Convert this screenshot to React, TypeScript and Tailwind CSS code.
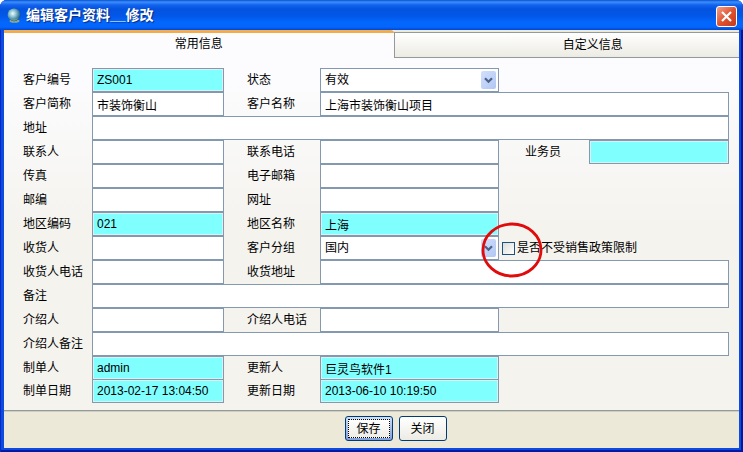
import type { ReactNode } from 'react';

const inputBase =
  'block h-6 w-full min-w-0 rounded-none border border-[#8499af] px-1 text-[12px] leading-4 text-black outline-none';

type FieldProps = {
  id: string;
  label: string;
  value?: string;
  readOnly?: boolean;
  labelClass?: string;
  span?: string;
};

function Label({ id, className = '', children }: { id: string; className?: string; children: ReactNode }) {
  return (
    <label htmlFor={id} className={`whitespace-nowrap leading-4 ${className}`}>
      {children}
    </label>
  );
}

function Field({ id, label, value = '', readOnly = false, labelClass = '', span = '' }: FieldProps) {
  return (
    <>
      <Label id={id} className={labelClass}>
        {label}
      </Label>
      <div className={span}>
        <input
          id={id}
          type="text"
          defaultValue={value}
          readOnly={readOnly}
          className={`${inputBase} ${readOnly ? 'bg-[#80ffff] shadow-[inset_0_0_0_1px_#d8f2f2]' : 'bg-white'}`}
        />
      </div>
    </>
  );
}

function SelectField({ id, label, value }: { id: string; label: string; value: string }) {
  return (
    <>
      <Label id={id} className="pl-[23px]">
        {label}
      </Label>
      <div className="relative">
        <select id={id} defaultValue={value} className={`${inputBase} appearance-none bg-white`}>
          <option>{value}</option>
        </select>
        <span className="pointer-events-none absolute top-[3px] right-[3px] flex h-[18px] w-[15px] items-center justify-center rounded-[2px] bg-linear-to-br from-[#d3e0fd] to-[#b0c6f4]">
          <svg width="9" height="7" viewBox="0 0 9 7" fill="none" aria-hidden="true">
            <path d="M1 1.2 4.5 4.7 8 1.2" stroke="#4d6185" strokeWidth="2.2" />
          </svg>
        </span>
      </div>
    </>
  );
}

const rowClass =
  'grid grid-cols-[69px_132px_96px_179px_90px_minmax(100px,1fr)] items-center';

function Row({ children }: { children: ReactNode }) {
  return <div className={rowClass}>{children}</div>;
}

function Globe() {
  return (
    <svg width="14" height="15" viewBox="0 0 14 15" aria-hidden="true">
      <defs>
        <radialGradient id="globe" cx="0.4" cy="0.4" r="0.65">
          <stop offset="0" stopColor="#f4fbfc" />
          <stop offset="0.4" stopColor="#8cc4d4" />
          <stop offset="0.85" stopColor="#2c6e90" />
          <stop offset="1" stopColor="#1c466a" />
        </radialGradient>
      </defs>
      <ellipse cx="7.5" cy="13" rx="5" ry="1.8" fill="#8fa894" />
      <circle cx="7" cy="6.8" r="6.4" fill="url(#globe)" />
      <path d="M3 10.300c2 1.200 5.500 1.300 8.500-.300-1 2-2.800 2.700-4.500 2.700s-3-.9-4-2.400Z" fill="#6ba08c" />
    </svg>
  );
}

export default function App() {
  return (
    <div className="bg-white">
      <main className="flex min-h-screen flex-col overflow-hidden rounded-t-[7px] bg-[#0d4ade] px-1 pb-1 font-['Liberation_Sans','Noto_Sans_CJK_SC',sans-serif] text-[12px] text-black shadow-[inset_1px_0_0_#0a28c8,inset_-2px_-2px_0_#0019a4]">
        <header className="-mx-1 flex h-[30px] shrink-0 items-center bg-[linear-gradient(180deg,#0a4fd0_0,#3b8ffc_2px,#1463ee_5px,#0453df_9px,#0257e8_16px,#0367fd_22px,#0466fc_27px,#0247cf_30px)] pr-[6px] pl-[7px]">
          <Globe />
          <h1 className="ml-[5px] flex-1 text-[14px] leading-5 font-bold text-white [text-shadow:1px_1px_1px_#0a2a80]">
            编辑客户资料__修改
          </h1>
          <button
            type="button"
            aria-label="关闭窗口"
            className="mt-[2px] flex h-[21px] w-[21px] items-center justify-center rounded-[3px] border border-white bg-linear-to-br from-[#f0a08a] via-[#e0532f] to-[#c4391a]"
          >
            <svg width="13" height="13" viewBox="0 0 13 13" aria-hidden="true">
              <path d="M2 2 11 11M11 2 2 11" stroke="#fff" strokeWidth="2.2" />
            </svg>
          </button>
        </header>

        <section className="border-b border-[#919b9c] bg-[linear-gradient(180deg,#fcfcfe_0,#fcfcfe_50px,#f4f3ee_200px)]">
          <div role="tablist" className="flex items-start">
            <button
              type="button"
              role="tab"
              aria-selected="true"
              className="h-7 w-[53%] rounded-tr-[3px] border-t-3 border-[#f0ac50] pb-[4px] leading-4"
            >
              常用信息
            </button>
            <div className="flex-1 bg-[#ece9d8] pt-[2px]">
              <button
                type="button"
                role="tab"
                aria-selected="false"
                className="block h-[26px] w-full border-y border-l border-[#919b9c] bg-linear-to-b from-white to-[#ecebe3] pl-[52px] leading-4"
              >
                自定义信息
              </button>
            </div>
          </div>

          <form className="pt-[10px] pr-[10px] pb-[7px] pl-[19px]">
            <Row>
              <Field id="code" label="客户编号" value="ZS001" readOnly />
              <SelectField id="status" label="状态" value="有效" />
            </Row>
            <Row>
              <Field id="short" label="客户简称" value="市装饰衡山" />
              <Field id="name" label="客户名称" value="上海市装饰衡山项目" labelClass="pl-[23px]" span="col-span-3" />
            </Row>
            <Row>
              <Field id="address" label="地址" span="col-span-5" />
            </Row>
            <Row>
              <Field id="contact" label="联系人" />
              <Field id="phone" label="联系电话" labelClass="pl-[23px]" />
              <Field id="sales" label="业务员" labelClass="pl-[26px]" readOnly />
            </Row>
            <Row>
              <Field id="fax" label="传真" />
              <Field id="email" label="电子邮箱" labelClass="pl-[23px]" />
            </Row>
            <Row>
              <Field id="zip" label="邮编" />
              <Field id="site" label="网址" labelClass="pl-[23px]" />
            </Row>
            <Row>
              <Field id="areaCode" label="地区编码" value="021" readOnly />
              <Field id="areaName" label="地区名称" value="上海" labelClass="pl-[23px]" readOnly />
            </Row>
            <Row>
              <Field id="receiver" label="收货人" />
              <SelectField id="group" label="客户分组" value="国内" />
              <div className="relative col-span-2 flex items-center gap-[2px] pl-[3px]">
                <input
                  id="policy"
                  type="checkbox"
                  className="h-[13px] w-[13px] appearance-none border border-[#1c5180] bg-linear-to-br from-[#dcdcd7] to-white"
                />
                <Label id="policy">是否不受销售政策限制</Label>
                <svg
                  className="pointer-events-none absolute -top-5 -left-[18px] z-10"
                  width="62"
                  height="58"
                  viewBox="0 0 62 58"
                  fill="none"
                  aria-hidden="true"
                >
                  <ellipse cx="31" cy="30" rx="29" ry="26" stroke="#e00b0b" strokeWidth="2.8" />
                </svg>
              </div>
            </Row>
            <Row>
              <Field id="receiverPhone" label="收货人电话" />
              <Field id="receiverAddress" label="收货地址" labelClass="pl-[23px]" span="col-span-3" />
            </Row>
            <Row>
              <Field id="note" label="备注" span="col-span-5" />
            </Row>
            <Row>
              <Field id="introducer" label="介绍人" />
              <Field id="introducerPhone" label="介绍人电话" labelClass="pl-[23px]" />
            </Row>
            <Row>
              <Field id="introducerNote" label="介绍人备注" span="col-span-5" />
            </Row>
            <Row>
              <Field id="creator" label="制单人" value="admin" readOnly />
              <Field id="updater" label="更新人" value="巨灵鸟软件1" labelClass="pl-[23px]" readOnly />
            </Row>
            <div className="-mt-px">
              <Row>
                <Field id="created" label="制单日期" value="2013-02-17 13:04:50" readOnly />
                <Field id="updated" label="更新日期" value="2013-06-10 10:19:50" labelClass="pl-[23px]" readOnly />
              </Row>
            </div>
          </form>
        </section>

        <footer className="flex flex-1 items-start justify-center gap-[6px] bg-[#ece9d8] pt-[5px] pb-[7px] pl-12 shadow-[inset_0_1px_0_#d0cec0]">
          <button
            type="button"
            className="h-[25px] w-12 rounded-[3px] border border-[#003c74] bg-linear-to-b from-[#cee0fb] to-[#7f9fdc] p-[2px]"
          >
            <span className="flex h-full items-center justify-center border border-dotted border-black bg-linear-to-b from-white to-[#eeede6] leading-4">
              保存
            </span>
          </button>
          <button
            type="button"
            className="h-[25px] w-12 rounded-[3px] border border-[#003c74] bg-linear-to-b from-white to-[#ecebe5] leading-4"
          >
            关闭
          </button>
        </footer>
      </main>
    </div>
  );
}
